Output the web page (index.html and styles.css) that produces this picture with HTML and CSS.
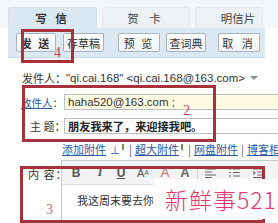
FILE: index.html
```html
<!DOCTYPE html>
<html>
<head>
<meta charset="utf-8">
<link rel="stylesheet" href="styles.css">
</head>
<body>
<div class="page">
  <div class="tabs">
    <div class="tab tab-active">写 信</div>
    <div class="tab tab-card">贺 卡</div>
    <div class="tab tab-post">明信片</div>
  </div>
  <div class="toolbar">
    <span class="btn btn-send">发 送</span>
    <span class="btn btn-draft">存草稿</span>
    <span class="btn btn-preview">预 览</span>
    <span class="btn btn-dict">查词典</span>
    <span class="btn btn-cancel">取 消</span>
  </div>
  <div class="from-row">
    <span class="cn">发件人：</span><span class="lat">"qi.cai.168" &lt;qi.cai.168@163.com&gt;</span><span class="caret"></span>
  </div>
  <div class="field-row">
    <span class="label label-to"><span class="link">收件人</span>：</span>
    <div class="input input-to"><span class="lat">haha520@163.com ;</span></div>
  </div>
  <div class="field-row">
    <span class="label label-subj">主 题：</span>
    <div class="input input-subj">朋友我来了，来迎接我吧。</div>
  </div>
  <div class="links-row">
    <span class="link">添加附件</span>
    <span class="arrow">⊥</span>
    <span class="pic"></span>
    <span class="sep">|</span>
    <span class="link">超大附件</span>
    <span class="pic"></span>
    <span class="sep">|</span>
    <span class="link">网盘附件</span>
    <span class="sep">|</span>
    <span class="link">博客相</span>
  </div>
  <div class="content-row">
    <span class="label label-content">内 容：</span>
    <div class="editor">
      <div class="ed-tools">
        <span class="tool t-b">B</span>
        <span class="tool t-i">I</span>
        <span class="tool t-u">U</span>
        <span class="tool t-size">A<sup>A</sup></span>
        <span class="tool t-color">A</span>
        <span class="tool t-bg">A</span>
        <span class="tool-sep"></span>
        <span class="tool t-align">
          <svg width="11" height="10" viewBox="0 0 11 10"><path d="M0 1h11M0 4h7M0 7h11M0 9.5h7" stroke="#666" stroke-width="1.2"/></svg>
        </span>
        <span class="tool t-list">
          <svg width="11" height="10" viewBox="0 0 11 10"><path d="M0 1h2M4 1h7M0 4.5h2M4 4.5h7M0 8h2M4 8h7" stroke="#666" stroke-width="1.2"/></svg>
        </span>
        <span class="tool t-indent">
          <svg width="11" height="10" viewBox="0 0 11 10"><path d="M0 1h11M4 4h7M4 7h7M0 9.5h11M0 3.5l2 1.5l-2 1.5" stroke="#666" stroke-width="1.2" fill="none"/></svg>
        </span>
      </div>
      <div class="ed-body">我这周末要去你那里玩</div>
    </div>
  </div>

  <div class="mark mark-4"></div>
  <div class="mark mark-2"></div>
  <div class="mark mark-3"></div>
  <span class="num num-4">4</span>
  <span class="num num-2">2</span>
  <span class="num num-3">3</span>
  <div class="watermark">新鲜事521</div>
</div>
</body>
</html>
```

FILE: styles.css
```css
* { box-sizing: border-box; }
html, body { margin: 0; padding: 0; }
body {
  width: 278px;
  height: 223px;
  overflow: hidden;
  background: #ffffff;
  font-family: "Noto Sans CJK SC", "Liberation Sans", sans-serif;
  font-size: 11px;
  color: #333;
}
.page {
  position: relative;
  width: 278px;
  height: 223px;
  overflow: hidden;
  background: linear-gradient(#f3f6f9 0, #f3f6f9 28px, #ffffff 28px);
}
.lat { font-family: "Liberation Sans", "DejaVu Sans", sans-serif; font-size: 11.5px; }
.cn { font-family: "Noto Sans CJK SC", sans-serif; }

.tabs {
  display: flex;
  gap: 5px;
  padding: 7px 0 0 8px;
  height: 28px;
}
.tab {
  height: 21px;
  line-height: 21px;
  text-align: center;
  font-size: 11.5px;
  color: #444;
  background: #eef1f4;
  border: 1px solid #e2e7ec;
  border-bottom: none;
  border-radius: 3px 3px 0 0;
}
.tab-active {
  width: 89px;
  background: #dce8f1;
  border-color: #d3dfe9;
  font-weight: bold;
  color: #333;
  letter-spacing: 3px;
}
.tab-card { width: 88px; letter-spacing: 4px; }
.tab-post { width: 68px; padding-left: 18px; }

.toolbar {
  display: flex;
  align-items: center;
  margin-left: 8px;
  width: 257px;
  height: 30px;
  background: #dce8f1;
  border-bottom: 1px solid #cbd8e3;
  padding-left: 8px;
}
.btn {
  display: inline-flex;
  align-items: center;
  justify-content: center;
  height: 19px;
  border: 1px solid #a7b3be;
  border-radius: 2px;
  background: linear-gradient(#ffffff, #eef2f5);
  font-size: 11px;
  color: #333;
}
.btn-send { width: 40px; font-weight: bold; letter-spacing: 2px; }
.btn-draft { width: 41px; margin-left: 7px; }
.btn-preview { width: 42px; margin-left: 14px; letter-spacing: 2px; }
.btn-dict { width: 40px; margin-left: 6px; }
.btn-cancel { width: 42px; margin-left: 12px; letter-spacing: 3px; }

.from-row {
  display: flex;
  align-items: center;
  height: 16px;
  margin-top: 12px;
  padding-left: 22px;
  white-space: nowrap;
}
.caret {
  display: inline-block;
  width: 0; height: 0;
  margin-left: 5px;
  border-left: 4px solid transparent;
  border-right: 4px solid transparent;
  border-top: 4px solid #8a949c;
}

.field-row {
  display: flex;
  align-items: center;
  height: 16px;
  margin-top: 8px;
}
.label { white-space: nowrap; }
.label-to { width: 64px; padding-left: 21px; font-size: 10.5px; }
.label-subj { width: 64px; padding-left: 30px; }
.link { color: #2a5aa6; text-decoration: underline; }
.input {
  flex: 1;
  height: 16px;
  display: flex;
  align-items: center;
  padding-left: 3px;
  border: 1px solid #b9c0c6;
  border-right: none;
  white-space: nowrap;
}
.input-to { background: #fffbe2; }
.input-subj { background: #fff; font-weight: bold; color: #222; font-size: 11.2px; }

.links-row {
  display: flex;
  align-items: center;
  height: 16px;
  margin-top: 7px;
  padding-left: 62px;
  white-space: nowrap;
  font-size: 11px;
}
.links-row .link { color: #2a5aa6; }
.arrow { color: #2a5aa6; margin-left: 4px; font-size: 10px; }
.pic {
  display: inline-block;
  width: 8px; height: 6px;
  margin: 0 2px 4px 2px;
  background: #8dbb6a;
  border: 1px solid #6f9a50;
}
.sep { color: #555; margin: 0 3px; }

.content-row {
  display: flex;
  margin-top: 3px;
}
.label-content { width: 61px; padding-left: 28px; padding-top: 6px; letter-spacing: 1px; }
.editor {
  flex: 1;
  border: 1px solid #c8ccd0;
  border-right: none;
  height: 80px;
}
.ed-tools {
  display: flex;
  align-items: center;
  height: 24px;
  background: #f4f4f4;
  border-bottom: 1px solid #dcdcdc;
  padding-left: 8px;
}
.tool {
  font-family: "Liberation Serif", serif;
  font-size: 12px;
  color: #555;
  display: inline-flex;
  align-items: center;
  justify-content: center;
}
.t-b { width: 12px; font-weight: bold; font-family: "Liberation Sans", sans-serif; }
.t-i { width: 12px; margin-left: 12px; font-style: italic; font-weight: bold; }
.t-u { width: 12px; margin-left: 9px; text-decoration: underline; font-weight: bold; font-family: "Liberation Sans", sans-serif; }
.t-size { width: 14px; margin-left: 9px; font-family: "Liberation Sans", sans-serif; font-size: 11px; }
.t-size sup { font-size: 7px; }
.t-color { width: 12px; margin-left: 9px; font-family: "Liberation Sans", sans-serif; color: #d36b6b; font-size: 13px; }
.t-bg { width: 12px; margin-left: 8px; font-family: "Liberation Sans", sans-serif; color: #666; font-size: 13px; font-weight: bold; }
.tool-sep { width: 1px; height: 14px; background: #d0d0d0; margin-left: 6px; }
.t-align { margin-left: 7px; }
.t-list { margin-left: 13px; }
.t-indent { margin-left: 13px; }
.ed-body {
  padding: 7px 0 0 15px;
  font-size: 11px;
  color: #333;
  white-space: nowrap;
}

/* annotation overlays */
.mark {
  position: absolute;
  border: 3px solid #a8323c;
}
.mark-4 { left: 21px; top: 29px; width: 53px; height: 34px; }
.mark-2 { left: 22px; top: 85px; width: 194px; height: 57px; }
.mark-3 { left: 20px; top: 166px; width: 245px; height: 57px; }
.num {
  position: absolute;
  font-family: "Liberation Serif", serif;
  font-size: 14px;
  line-height: 14px;
  color: #c4455a;
}
.num-4 { left: 54px; top: 46px; }
.num-2 { left: 183px; top: 104px; }
.num-3 { left: 46px; top: 203px; color: #d06c7c; }
.watermark {
  position: absolute;
  left: 153px;
  top: 179px;
  width: 125px;
  height: 40px;
  background: #ffffff;
  padding-left: 12px;
  font-family: "Noto Sans CJK SC", sans-serif;
  font-weight: 300;
  font-size: 23px;
  line-height: 40px;
  color: #e5356d;
  letter-spacing: 1px;
  white-space: nowrap;
}
```
